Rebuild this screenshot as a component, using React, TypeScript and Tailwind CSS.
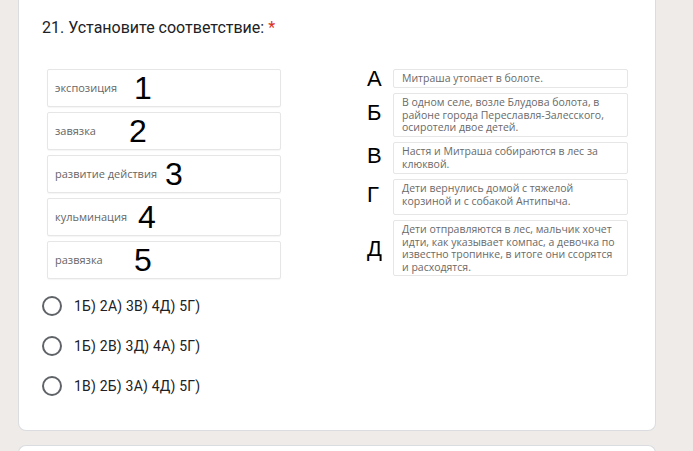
import React from 'react';

const stages = [
  { label: 'экспозиция', num: '1', labelW: 'w-[79px]' },
  { label: 'завязка', num: '2', labelW: 'w-[74px]' },
  { label: 'развитие действия', num: '3', labelW: 'w-[110px]' },
  { label: 'кульминация', num: '4', labelW: 'w-[83px]' },
  { label: 'развязка', num: '5', labelW: 'w-[79px]' },
];

const events = [
  { letter: 'А', text: 'Митраша утопает в болоте.', box: 'h-[19px]', letterPos: 'pt-[0px]' },
  {
    letter: 'Б',
    text: 'В одном селе, возле Блудова болота, в районе города Переславля-Залесского, осиротели двое детей.',
    box: 'h-[44px]',
    letterPos: 'pt-[10px]',
  },
  { letter: 'В', text: 'Настя и Митраша собираются в лес за клюквой.', box: 'h-[32px]', letterPos: 'pt-[4px]' },
  { letter: 'Г', text: 'Дети вернулись домой с тяжелой корзиной и с собакой Антипыча.', box: 'h-[36px]', letterPos: 'pt-[6px]' },
  {
    letter: 'Д',
    text: 'Дети отправляются в лес, мальчик хочет идти, как указывает компас, а девочка по известно тропинке, в итоге они ссорятся и расходятся.',
    box: 'h-[56px]',
    letterPos: 'pt-[19px]',
  },
];

const options = ['1Б) 2А) 3В) 4Д) 5Г)', '1Б) 2В) 3Д) 4А) 5Г)', '1В) 2Б) 3А) 4Д) 5Г)'];

export default function App() {
  return (
    <div className="w-[693px] h-[451px] overflow-hidden bg-[#efebe8] pl-[18px] font-['Roboto',sans-serif]">
      <div className="w-[638px] h-[441px] -mt-[10px] bg-white rounded-b-[8px] border border-t-0 border-[#dadce0] pt-[28px] pl-[23px]">
        <div className="text-[16px] leading-[20px] text-[#202124]">
          21. Установите соответствие: <span className="text-[#d93025]">*</span>
        </div>

        <div className="flex mt-[31px] ml-[5px] font-['Open_Sans',sans-serif]">
          <div className="w-[234px] flex flex-col gap-[5px]">
            {stages.map((s) => (
              <div
                key={s.label}
                className="h-[38px] flex items-center border border-[#e6e6e6] rounded-[2px] shadow-[0_1px_1px_rgba(0,0,0,0.04)] pl-[7px]"
              >
                <span className={`${s.labelW} shrink-0 text-[11px] text-[#666]`}>{s.label}</span>
                <span className="text-[32px] leading-none text-black font-['Liberation_Sans',sans-serif]">
                  {s.num}
                </span>
              </div>
            ))}
          </div>

          <div className="ml-[85px] flex flex-col gap-[5px]">
            {events.map((e) => (
              <div key={e.letter} className="flex">
                <div className={`w-[27px] pl-[1px] ${e.letterPos} text-[22px] leading-[19px] text-black font-['Liberation_Sans',sans-serif]`}>
                  {e.letter}
                </div>
                <div
                  className={`${e.box} w-[235px] border border-[#e6e6e6] rounded-[2px] px-[8px] pt-[2px] text-[10.5px] leading-[12.5px] text-[#6a6a6a]`}
                >
                  {e.text}
                </div>
              </div>
            ))}
          </div>
        </div>

        <div className="mt-[17px] flex flex-col gap-[20px]">
          {options.map((o) => (
            <div key={o} className="flex items-center h-[20px]">
              <div className="w-[20px] h-[20px] rounded-full border-2 border-[#5f6368]" />
              <span className="ml-[12px] text-[14px] text-[#202124] tracking-[0.2px]">{o}</span>
            </div>
          ))}
        </div>
      </div>
      <div className="w-[638px] h-[40px] mt-[14px] bg-white rounded-t-[8px] border border-b-0 border-[#dadce0]" />
    </div>
  );
}
